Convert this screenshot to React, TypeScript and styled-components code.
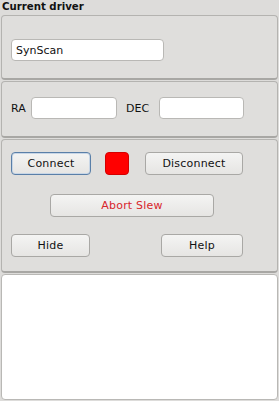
import React from "react";
import styled, { createGlobalStyle } from "styled-components";

const Global = createGlobalStyle`
  html, body { margin: 0; padding: 0; background: #dddcda; }
  body { font-family: "DejaVu Sans", sans-serif; font-size: 11px; color: #111; }
  * { box-sizing: border-box; }
`;

const Page = styled.div`
  width: 279px;
  height: 401px;
  display: flex;
  flex-direction: column;
  padding: 0 1px 1px 1px;
  background: #dddcda;
`;

const Title = styled.div`
  font-weight: bold;
  font-size: 10.2px;
  height: 15px;
  line-height: 13px;
  padding-left: 1px;
`;

const Group = styled.div<{ $h: number }>`
  height: ${(p) => p.$h}px;
  border: 1px solid #b4b3b0;
  border-bottom: 2px solid #a8a7a4;
  border-radius: 4px;
  background: #dfdedc;
  margin-bottom: 1px;
  display: flex;
  flex-direction: column;
`;

const Row = styled.div<{ $pt: number }>`
  display: flex;
  align-items: center;
  padding: ${(p) => p.$pt}px 0 0 9px;
`;

const Input = styled.div<{ $w: number }>`
  width: ${(p) => p.$w}px;
  height: 22px;
  background: #fff;
  border: 1px solid #b9b8b5;
  border-radius: 4px;
  display: flex;
  align-items: center;
  padding-left: 4px;
  font-size: 11px;
`;

const Label = styled.span<{ $w: number; $ml?: number }>`
  width: ${(p) => p.$w}px;
  margin-left: ${(p) => p.$ml ?? 0}px;
  font-size: 11px;
`;

const Button = styled.div<{ $w: number; $ml?: number; $focus?: boolean; $red?: boolean }>`
  width: ${(p) => p.$w}px;
  margin-left: ${(p) => p.$ml ?? 0}px;
  height: 23px;
  border: 1px solid ${(p) => (p.$focus ? "#5a7fa8" : "#a9a8a5")};
  box-shadow: ${(p) => (p.$focus ? "inset 0 0 0 1px #c8d6e6" : "none")};
  border-radius: 4px;
  background: linear-gradient(#f4f4f3, #e6e5e3);
  display: flex;
  align-items: center;
  justify-content: center;
  font-size: 11px;
  color: ${(p) => (p.$red ? "#d8262c" : "#111")};
  letter-spacing: 0.2px;
`;

const Led = styled.div`
  width: 24px;
  height: 23px;
  margin-left: 14px;
  background: #ff0000;
  border-radius: 4px;
  border: 1px solid #d40000;
`;

const Log = styled.div`
  flex: 1;
  background: #fff;
  border: 1px solid #b9b8b5;
  border-radius: 4px;
`;

export default function App() {
  return (
    <>
      <Global />
      <Page>
        <Title>Current driver</Title>
        <Group $h={65}>
          <Row $pt={23}>
            <Input $w={153}>SynScan</Input>
          </Row>
        </Group>
        <Group $h={57}>
          <Row $pt={15}>
            <Label $w={20}>RA</Label>
            <Input $w={86} />
            <Label $w={33} $ml={9}>DEC</Label>
            <Input $w={85} />
          </Row>
        </Group>
        <Group $h={134}>
          <Row $pt={12}>
            <Button $w={80} $focus>Connect</Button>
            <Led />
            <Button $w={98} $ml={16}>Disconnect</Button>
          </Row>
          <Row $pt={19}>
            <Button $w={164} $ml={39} $red>Abort Slew</Button>
          </Row>
          <Row $pt={17}>
            <Button $w={79}>Hide</Button>
            <Button $w={82} $ml={71}>Help</Button>
          </Row>
        </Group>
        <Log />
      </Page>
    </>
  );
}
